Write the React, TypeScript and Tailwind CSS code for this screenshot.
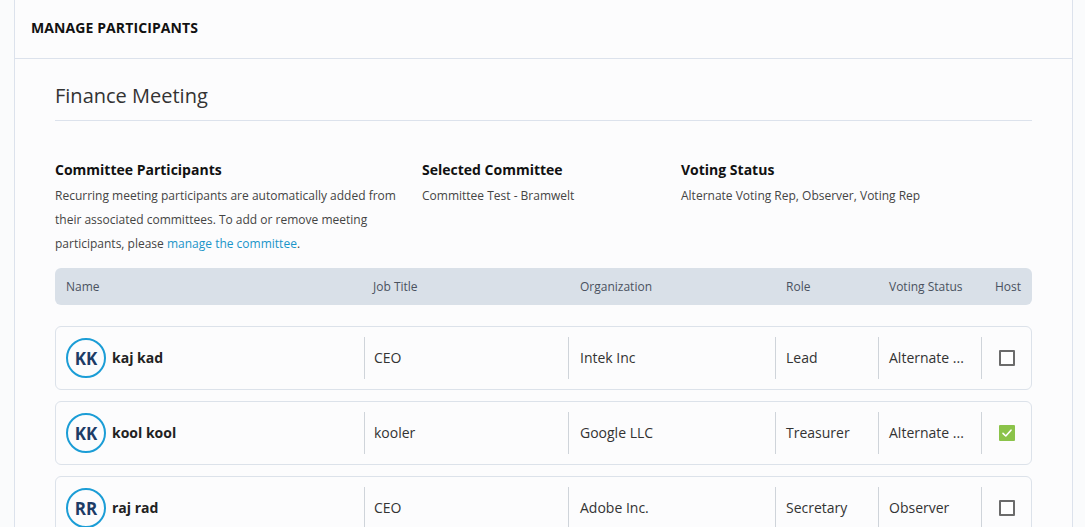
import React from "react";

const rows = [
  { initials: "KK", name: "kaj kad", job: "CEO", org: "Intek Inc", role: "Lead", voting: "Alternate ...", host: false },
  { initials: "KK", name: "kool kool", job: "kooler", org: "Google LLC", role: "Treasurer", voting: "Alternate ...", host: true },
  { initials: "RR", name: "raj rad", job: "CEO", org: "Adobe Inc.", role: "Secretary", voting: "Observer", host: false },
];

function Checkbox({ checked }: { checked: boolean }) {
  if (checked) {
    return (
      <div className="w-[16px] h-[16px] bg-[#8bc34a] rounded-[1px] flex items-center justify-center">
        <svg width="12" height="12" viewBox="0 0 12 12" fill="none">
          <path d="M2 6.3 L4.8 9 L10 3.2" stroke="white" strokeWidth="1.6" strokeLinecap="round" strokeLinejoin="round" />
        </svg>
      </div>
    );
  }
  return <div className="w-[16px] h-[16px] border-2 border-[#6b6b6b] rounded-[1px] bg-white" />;
}

export default function App() {
  return (
    <div className="min-h-[527px] bg-[#fafbfc] font-['Open_Sans',sans-serif] text-[#333]">
      <div className="ml-[14px] w-[1059px] min-h-[527px] bg-[#fcfcfd] border-l border-r border-[#dce2ec]">
        <div className="h-[59px] border-b border-[#dce2ec] pl-[16px] flex items-center">
          <h2 className="text-[14px] font-bold text-[#111] leading-[20px] tracking-[0.1px] -mt-[2px]">MANAGE PARTICIPANTS</h2>
        </div>
        <div className="px-[40px]">
          <h1 className="pt-[23px] pb-[10px] text-[20px] leading-[28px] text-[#333] border-b border-[#dce2ec]">
            Finance Meeting
          </h1>
          <div className="flex mt-[39px]">
            <div className="w-[367px] pr-[20px]">
              <h3 className="text-[14px] leading-[20px] font-bold text-[#111] mb-[4px]">Committee Participants</h3>
              <p className="text-[12px] leading-[24px] text-[#444]">
                Recurring meeting participants are automatically added from their associated committees. To add or remove meeting participants, please{" "}
                <span className="text-[#1a95c9]">manage the committee</span>.
              </p>
            </div>
            <div className="w-[259px]">
              <h3 className="text-[14px] leading-[20px] font-bold text-[#111] mb-[4px]">Selected Committee</h3>
              <p className="text-[12px] leading-[24px] text-[#444]">Committee Test - Bramwelt</p>
            </div>
            <div className="flex-1">
              <h3 className="text-[14px] leading-[20px] font-bold text-[#111] mb-[4px]">Voting Status</h3>
              <p className="text-[12px] leading-[24px] text-[#444]">Alternate Voting Rep, Observer, Voting Rep</p>
            </div>
          </div>

          <div className="mt-[12px] h-[37px] bg-[#d9e0e8] rounded-[6px] flex items-center text-[12px] text-[#4a5260]">
            <div className="w-[309px] pl-[11px]">Name</div>
            <div className="w-[204px] pl-[9px]">Job Title</div>
            <div className="w-[207px] pl-[12px]">Organization</div>
            <div className="w-[103px] pl-[11px]">Role</div>
            <div className="w-[103px] pl-[11px]">Voting Status</div>
            <div className="flex-1 pl-[14px]">Host</div>
          </div>

          <div className="mt-[21px] flex flex-col gap-[11px]">
            {rows.map((r, i) => (
              <div key={i} className="h-[64px] border border-[#dce2ea] rounded-[6px] bg-[#fcfcfd] flex items-center text-[14px] text-[#333]">
                <div className="w-[308px] pl-[10px] flex items-center">
                  <div className="w-[40px] h-[40px] rounded-full border-2 border-[#1b9dd6] flex items-center justify-center text-[17px] font-bold text-[#1d3b66] leading-none">
                    {r.initials}
                  </div>
                  <span className="ml-[6px] font-bold text-[#222] -mt-[1px]">{r.name}</span>
                </div>
                <div className="w-[204px] h-[42px] border-l border-[#cfd4da] pl-[9px] flex items-center pb-[1px]">{r.job}</div>
                <div className="w-[207px] h-[42px] border-l border-[#cfd4da] pl-[11px] flex items-center pb-[1px]">{r.org}</div>
                <div className="w-[103px] h-[42px] border-l border-[#cfd4da] pl-[10px] flex items-center pb-[1px]">{r.role}</div>
                <div className="w-[103px] h-[42px] border-l border-[#cfd4da] pl-[10px] flex items-center pb-[1px] whitespace-nowrap overflow-hidden">{r.voting}</div>
                <div className="flex-1 h-[42px] border-l border-[#cfd4da] flex items-center justify-center">
                  <Checkbox checked={r.host} />
                </div>
              </div>
            ))}
          </div>
        </div>
      </div>
    </div>
  );
}
